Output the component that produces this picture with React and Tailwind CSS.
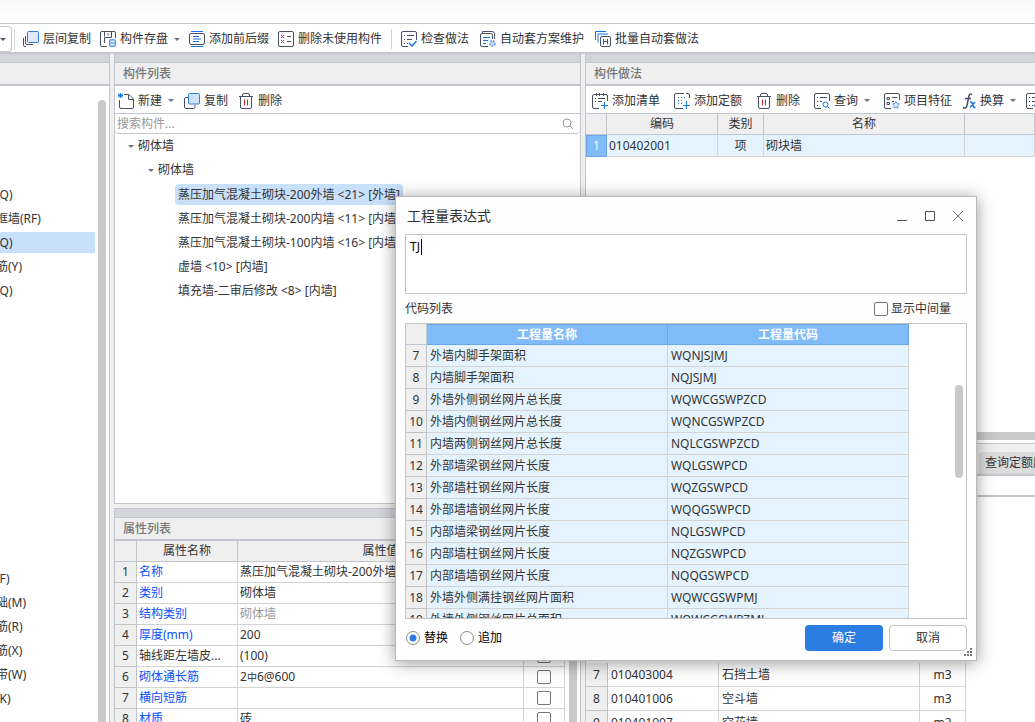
import { useState } from 'react';

const navItems = [
  '', '', '', '', '(Q)', '框墙(RF)', '(Q)', '筋(Y)', '(Q)', '', '', ')', '', '', '',
  '', '', '', '', '', '(F)', '础(M)', '筋(R)', '筋(X)', '带(W)', '(K)',
];

const components = [
  '蒸压加气混凝土砌块-200外墙 <21> [外墙]',
  '蒸压加气混凝土砌块-200内墙 <11> [内墙]',
  '蒸压加气混凝土砌块-100内墙 <16> [内墙]',
  '虚墙 <10> [内墙]',
  '填充墙-二审后修改 <8> [内墙]',
];

const properties = [
  { name: '名称', value: '蒸压加气混凝土砌块-200外墙', link: true },
  { name: '类别', value: '砌体墙', link: true },
  { name: '结构类别', value: '砌体墙', link: true, muted: true },
  { name: '厚度(mm)', value: '200', link: true },
  { name: '轴线距左墙皮...', value: '(100)' },
  { name: '砌体通长筋', value: <>2<span className="text-[10px]">中</span>6@600</>, link: true },
  { name: '横向短筋', value: '', link: true },
  { name: '材质', value: '砖', link: true },
];

// first visible quota is no. 7
const quotas = [
  ['010403004', '石挡土墙'],
  ['010401006', '空斗墙'],
  ['010401007', '空花墙'],
];

const codes = [
  ['外墙内脚手架面积', 'WQNJSJMJ'],
  ['内墙脚手架面积', 'NQJSJMJ'],
  ['外墙外侧钢丝网片总长度', 'WQWCGSWPZCD'],
  ['外墙内侧钢丝网片总长度', 'WQNCGSWPZCD'],
  ['内墙两侧钢丝网片总长度', 'NQLCGSWPZCD'],
  ['外部墙梁钢丝网片长度', 'WQLGSWPCD'],
  ['外部墙柱钢丝网片长度', 'WQZGSWPCD'],
  ['外部墙墙钢丝网片长度', 'WQQGSWPCD'],
  ['内部墙梁钢丝网片长度', 'NQLGSWPCD'],
  ['内部墙柱钢丝网片长度', 'NQZGSWPCD'],
  ['内部墙墙钢丝网片长度', 'NQQGSWPCD'],
  ['外墙外侧满挂钢丝网片面积', 'WQWCGSWPMJ'],
  ['外墙外侧钢丝网片总面积', 'WQWCGSWPZMJ'],
];

const Icon = ({ children }) => (
  <svg width="16" height="16" viewBox="0 0 16 16" fill="none" stroke="#4a5064" className="shrink-0">
    {children}
  </svg>
);

const icons = {
  layerCopy: (
    <Icon>
      <path d="M2.500 5v7q0 1.500 1.500 1.500h6M.5 7v7q0 1.500 1.500 1.500h1" />
      <rect x="4.500" y=".5" width="11" height="11" rx="1" fill="#dfeafb" stroke="#2f7de1" />
    </Icon>
  ),
  save: (
    <Icon>
      <path d="M15.500 7V2q0-1.500-1.500-1.500H2Q.5.5.5 2v12q0 1.500 1.500 1.500h5M4.500.5v5M4.500 12V6.500h7v-6M8 2.500v2" />
      <rect x="9.500" y="8.500" width="6" height="7" rx="1" fill="#8fbcf6" stroke="#5b9bf0" />
      <path d="M11 13.500h3M11 10.500h3" stroke="#fff" />
    </Icon>
  ),
  affix: (
    <Icon>
      <rect x=".5" y="2.500" width="15" height="11" rx="1.500" />
      <path d="M2 .5h12M2 15.500h12M4 5.500h6M4 8h8M4 10.500h6" stroke="#1677e8" />
    </Icon>
  ),
  unused: (
    <Icon>
      <rect x=".5" y=".5" width="15" height="15" rx="1.500" />
      <path d="M9 5.500h4M9 10.500h4" />
      <path d="m3 4 3 3m0-3L3 7m0 2 3 3m0-3-3 3" stroke="#d8232f" />
    </Icon>
  ),
  check: (
    <Icon>
      <path d="M15.500 9V2q0-1.500-1.500-1.500H2Q.5.5.5 2v12q0 1.500 1.500 1.500h5M3 4.500h1m2 0h7M3 8.500h1m2 0h5M3 12.500h1m2 0h1" />
      <path d="m8 12 3 3 4.500-5" stroke="#1677e8" strokeWidth="1.500" />
    </Icon>
  ),
  scheme: (
    <Icon>
      <path d="M2.500 2V.5H12q2.500 0 2.500 2.500v5M12.500 8V4q0-1.500-1.500-1.500H2Q.5 2.500.5 4v10q0 1.500 1.500 1.500h6" />
      <path d="M3 6.500h7M3 9.500h5M3 12.500h3" stroke="#1677e8" />
      <circle cx="12.500" cy="12.500" r="2.500" fill="#c6dcfa" stroke="#78aaf0" strokeWidth="2" strokeDasharray="2 1" />
    </Icon>
  ),
  batch: (
    <Icon>
      <path d="M.5 9V.5H11M3 11.500V3h10" stroke="#1677e8" />
      <rect x="5.500" y="5.500" width="10" height="10" rx="1.500" />
      <path d="M8.500 8v5.500m4-5.500v5.500m-4-3h4" />
    </Icon>
  ),
  create: (
    <Icon>
      <path d="M6 1.500h5l4.500 4.500v8q0 1.500-1.500 1.500H3q-1.500 0-1.500-1.500V7M10.500 2v4.500H15" />
      <path d="m0 .5 5 4m0-4-5 4M2.500 0v5M0 2.500h5" stroke="#1677e8" />
    </Icon>
  ),
  copy: (
    <Icon>
      <path d="M4 4.500H2Q.5 4.500.5 6v8q0 1.500 1.500 1.500h7.500q1.500 0 1.500-1.500v-2" />
      <rect x="4.500" y=".5" width="11" height="10.500" rx="1" fill="#cfe2fb" stroke="#2f7de1" />
    </Icon>
  ),
  trash: (
    <Icon>
      <path d="M1 3.500h14M4.500 3.500V2q0-1.500 1.500-1.500h4q1.500 0 1.500 1.500v1.500M2.500 3.500V14q0 1.500 1.500 1.500h8q1.500 0 1.500-1.500V3.500" />
      <path d="M6.500 6.500v6m3-6v6" stroke="#d8232f" />
    </Icon>
  ),
  addList: (
    <Icon>
      <path d="M15.500 8V3q0-1.500-1.500-1.500H2Q.5 1.500.5 3v11q0 1.500 1.500 1.500h5M4.500 0v3m3-3v3m4-3v3M3 5.500h1m2 0h7M3 8.500h1m2 0h4" />
      <path d="M12.500 9v7M9 12.500h7" stroke="#1677e8" />
    </Icon>
  ),
  addQuota: (
    <Icon>
      <path d="M15.500 5V2q0-1.500-1.500-1.500h-2M10 .5H2Q.5.5.5 2v12q0 1.500 1.500 1.500h7" />
      <path d="M4 4.500h1m2 0h1m2 0h1M4 7.500h1m2 0h1M4 10.500h1m2 0h1M12.500 8v8M9 12.500h7" stroke="#1677e8" />
    </Icon>
  ),
  query: (
    <Icon>
      <path d="M15.500 8V2q0-1.500-1.500-1.500H2Q.5.5.5 2v12q0 1.500 1.500 1.500h5M3 4.500h1m2 0h7M3 8.500h1m2 0h2M3 12.500h1" />
      <circle cx="11.500" cy="11.500" r="2.500" stroke="#1677e8" />
      <path d="m13.500 13.500 2 2" stroke="#1677e8" />
    </Icon>
  ),
  feature: (
    <Icon>
      <path d="M15.500 7V2q0-1.500-1.500-1.500H2Q.5.5.5 2v12q0 1.500 1.500 1.500h5M3 4.500h2.500v2H3zM3 9.500h2.500v2H3zM8 4.500h5M8 8.500h2" />
      <path d="m12 8.500 1.100 2.200 2.400.3-1.800 1.700.5 2.500-2.200-1.200-2.200 1.200.5-2.500L8.500 11l2.400-.3z" fill="#e4effd" stroke="#5b9bf0" />
    </Icon>
  ),
  fx: (
    <svg width="14" height="16" viewBox="0 0 14 16" fill="none" stroke="#4a5064" className="shrink-0">
      <path d="M10 1.500C8 0 7 2 6.500 5L5 12.500c-.5 2.500-2 3-4 2M3 5.500h6" strokeWidth="1.500" />
      <path d="M8 9h1.500l2.500 5.500h1.500M13 9l-5 5.500" stroke="#1677e8" strokeWidth="1.500" />
    </svg>
  ),
};

const Arrow = () => <span className="ml-0.5 border-x-[3px] border-t-[3px] border-x-transparent border-t-gray-500" />;

const ToolButton = ({ icon, label, menu }) => (
  <button className="flex shrink-0 items-center gap-1 whitespace-nowrap">
    {icons[icon]}
    {label}
    {menu && <Arrow />}
  </button>
);

const PanelHeader = ({ title }) => (
  <div className="shrink-0">
    <div className="h-[9px] border-b border-[#c3c6cc] bg-[#d3d5da]" />
    <h2 className="h-[23px] border-b-2 border-[#c3c6cc] bg-[#efefef] pl-2 leading-[21px] font-medium text-[#777]">{title}</h2>
  </div>
);

const th = 'border-r border-b border-[#c3c6cc] bg-[#efefef] p-0 font-normal';
const td = 'truncate border-r border-b border-[#d3d3d3] px-0.5 py-0';
const rowNo = 'border-r border-b border-[#c3c3c3] bg-[#efefef] p-0 text-center';

const MainToolbar = () => (
  <div className="flex h-[31px] shrink-0 items-center border-t border-b-2 border-t-[#c9c9c9] border-b-[#c3c6cc] bg-white pt-0.5">
    <button aria-label="楼层" className="flex h-[26px] w-3 items-center rounded-r border border-l-0 border-[#c9c9c9]">
      <span className="border-x-[3px] border-t-[3px] border-x-transparent border-t-gray-600" />
    </button>
    <div className="mr-2 ml-0.5 h-5 w-px bg-gray-300" />
    <div className="flex gap-[9px]">
      <ToolButton icon="layerCopy" label="层间复制" />
      <ToolButton icon="save" label="构件存盘" menu />
      <ToolButton icon="affix" label="添加前后缀" />
      <ToolButton icon="unused" label="删除未使用构件" />
    </div>
    <div className="mx-[9px] h-5 w-px bg-gray-300" />
    <div className="flex gap-[11px]">
      <ToolButton icon="check" label="检查做法" />
      <ToolButton icon="scheme" label="自动套方案维护" />
      <ToolButton icon="batch" label="批量自动套做法" />
    </div>
  </div>
);

const Sidebar = () => (
  <aside className="flex w-[110px] shrink-0 flex-col border-r border-[#c3c6cc] bg-white">
    <PanelHeader title="" />
    <div className="flex min-h-0 flex-1">
      <ul className="w-[95px] overflow-hidden">
        {navItems.map((item, i) => (
          <li key={i} className="h-6 pt-0.5">
            <div className={`h-[21px] leading-[21px] ${i === 6 ? 'bg-[#c9e0fb]' : ''}`}>
              <span className="-ml-1">{item}</span>
            </div>
          </li>
        ))}
      </ul>
      <div className="mt-3.5 ml-[3px] w-2 rounded-t bg-[#c9c9c9]" />
    </div>
  </aside>
);

const ComponentList = () => (
  <section className="flex min-h-0 flex-1 flex-col border-x border-b border-[#c3c6cc] bg-white">
    <PanelHeader title="构件列表" />
    <div className="flex h-7 shrink-0 items-center gap-2.5 border-b border-[#c3c6cc] pt-0.5 pl-[3px]">
      <ToolButton icon="create" label="新建" menu />
      <ToolButton icon="copy" label="复制" />
      <ToolButton icon="trash" label="删除" />
    </div>
    <label className="flex h-5 shrink-0 items-center rounded border-b border-[#c3c6cc] pr-1.5">
      <input aria-label="搜索构件" placeholder="搜索构件..." className="min-w-0 flex-1 pl-0.5 outline-none placeholder:text-[#999]" />
      <svg width="12" height="12" viewBox="0 0 12 12" fill="none" stroke="#999">
        <circle cx="5" cy="5" r="4" />
        <path d="m8 8 3 3" />
      </svg>
    </label>
    <ul className="overflow-hidden leading-6 whitespace-nowrap">
      <li>
        <div className="flex items-center gap-1 pl-[11px]"><Arrow />砌体墙</div>
        <ul>
          <li>
            <div className="flex items-center gap-1 pl-[31px]"><Arrow />砌体墙</div>
            <ul className="pl-[60px]">
              {components.map((c, i) => (
                <li key={c} className="flex h-6 items-center">
                  <span className={`h-[21px] rounded-sm px-[3px] leading-[21px] ${i === 0 ? 'bg-[#c9e0fb]' : ''}`}>{c}</span>
                </li>
              ))}
            </ul>
          </li>
        </ul>
      </li>
    </ul>
  </section>
);

const PropertyList = () => (
  <section className="h-[214px] shrink-0 overflow-hidden border-x border-t border-[#c3c6cc] bg-white">
    <PanelHeader title="属性列表" />
    <div className="flex">
      <table className="flex-1 table-fixed border-separate border-spacing-0">
        <colgroup>
          <col className="w-[22px]" />
          <col className="w-[101px]" />
          <col />
          <col className="w-[41px]" />
        </colgroup>
        <thead>
          <tr className="h-[21px]">
            <th className={th} />
            <th className={th}>属性名称</th>
            <th className={th}>属性值</th>
            <th className={th} />
          </tr>
        </thead>
        <tbody>
          {properties.map((p, i) => (
            <tr key={p.name} className="h-[21px]">
              <td className={rowNo}>{i + 1}</td>
              <td className={`${td} ${p.link ? 'text-[#0a50ff]' : ''}`}>{p.name}</td>
              <td className={`${td} ${p.muted ? 'text-[#999]' : ''}`}>{p.value}</td>
              <td className={td}>
                <input type="checkbox" aria-label={p.name} className="mx-auto block size-3.5 appearance-none rounded-xs border border-[#777] bg-white" />
              </td>
            </tr>
          ))}
        </tbody>
      </table>
      <div className="mr-[3px] ml-1 w-2 bg-[#c9c9c9]" />
    </div>
  </section>
);

const MethodPanel = () => (
  <section className="flex min-h-0 flex-1 flex-col overflow-hidden border-b border-l border-[#c3c6cc] bg-white">
    <PanelHeader title="构件做法" />
    <div className="flex h-7 shrink-0 items-center gap-3.5 border-b border-[#c3c6cc] pt-0.5 pl-1.5">
      <ToolButton icon="addList" label="添加清单" />
      <ToolButton icon="addQuota" label="添加定额" />
      <ToolButton icon="trash" label="删除" />
      <ToolButton icon="query" label="查询" menu />
      <ToolButton icon="feature" label="项目特征" />
      <div className="-ml-1 flex gap-2.5">
        <ToolButton icon="fx" label="换算" menu />
        <ToolButton icon="check" label="" />
      </div>
    </div>
    <table className="w-full table-fixed border-separate border-spacing-0">
      <colgroup>
        <col className="w-[21px]" />
        <col className="w-[111px]" />
        <col className="w-[46px]" />
        <col className="w-[201px]" />
        <col />
      </colgroup>
      <thead>
        <tr className="h-[21px]">
          <th className={th} />
          <th className={th}>编码</th>
          <th className={th}>类别</th>
          <th className={th}>名称</th>
          <th className={th} />
        </tr>
      </thead>
      <tbody>
        <tr className="h-[22px] bg-[#e5f3fe]">
          <td className="border border-[#6ba6ec] bg-[#80bbfa] p-0 text-center text-white">1</td>
          <td className={td}>010402001</td>
          <td className={`${td} text-center`}>项</td>
          <td className={td}>砌块墙</td>
          <td className={td} />
        </tr>
      </tbody>
    </table>
    <div className="mt-auto mb-[3px] h-2 shrink-0 bg-[#c9c9c9]" />
  </section>
);

const QuotaPanel = () => (
  <section className="flex h-[274px] shrink-0 flex-col overflow-hidden border-l border-[#c3c6cc] bg-white">
    <div className="flex h-7 shrink-0 items-end justify-end border-b-2 border-[#c3c6cc] bg-[#efefef]">
      <button className="h-[22px] w-[56px] overflow-hidden rounded-tl bg-[#dcdcdc] pl-1.5 text-left whitespace-nowrap">查询定额库</button>
    </div>
    <div className="h-[21px] shrink-0 border-b-2 border-[#c3c6cc]" />
    {/* list is scrolled to its last rows */}
    <div className="flex min-h-0 flex-1 items-start pt-[166px]">
      <table className="w-[380px] table-fixed border-separate border-spacing-0">
        <colgroup>
          <col className="w-[22px]" />
          <col className="w-[111px]" />
          <col />
          <col className="w-[46px]" />
        </colgroup>
        <tbody>
          {quotas.map(([code, name], i) => (
            <tr key={code} className="h-6">
              <td className={rowNo}>{i + 7}</td>
              <td className={`${td} pl-[3px]`}>{code}</td>
              <td className={`${td} pl-[3px]`}>{name}</td>
              <td className={`${td} text-center`}>m3</td>
            </tr>
          ))}
        </tbody>
      </table>
    </div>
  </section>
);

const ExpressionDialog = () => {
  const [expression, setExpression] = useState('TJ');
  const [mode, setMode] = useState('replace');
  const [showMiddle, setShowMiddle] = useState(false);

  const blueHead = 'border-r border-b border-t border-[#6ba6ec] bg-[#80bbfa] p-0 font-bold text-white';
  const radio = 'size-3.5 appearance-none rounded-full border border-[#888] bg-white checked:bg-[radial-gradient(circle,#2b7de1_3px,white_4px)]';

  return (
    <div
      role="dialog"
      aria-label="工程量表达式"
      className="absolute top-[196px] left-[395px] w-[582px] border border-[#b9b9b9] bg-[#fefefe] px-[9px] pb-[9px] shadow-[0_2px_16px_rgba(0,0,0,0.4)]"
    >
      <div className="flex h-[37px] items-center justify-between pr-[3px] pl-0.5">
        <h1 className="text-sm">工程量表达式</h1>
        <div className="flex gap-4">
          <button aria-label="最小化">
            <svg width="12" height="12" fill="none" stroke="#555"><path d="M1 10.500h10" /></svg>
          </button>
          <button aria-label="最大化">
            <svg width="12" height="12" fill="none" stroke="#555"><path d="M1.500 1.500h9v9h-9z" /></svg>
          </button>
          <button aria-label="关闭">
            <svg width="12" height="12" fill="none" stroke="#777"><path d="m1 1 10 10M11 1 1 11" /></svg>
          </button>
        </div>
      </div>
      <div className="relative">
        <textarea
          aria-label="表达式"
          value={expression}
          onChange={e => setExpression(e.target.value)}
          className="block h-[60px] w-full resize-none border border-[#c3c3c3] bg-white px-1 py-1 leading-4 text-black outline-none"
        />
        {/* caret */}
        <span className="absolute top-[5px] left-4 h-4 w-px bg-black" />
      </div>
      <div className="flex h-[29px] items-center justify-between pr-4">
        <span>代码列表</span>
        <label className="flex items-center gap-[3px]">
          <input
            type="checkbox"
            checked={showMiddle}
            onChange={e => setShowMiddle(e.target.checked)}
            className="size-3.5 appearance-none rounded-xs border border-[#777] bg-white checked:bg-[#2b7de1]"
          />
          显示中间量
        </label>
      </div>
      <div className="flex h-[296px] justify-between overflow-hidden border border-[#c3c3c3] bg-white">
        <table className="h-fit w-[503px] table-fixed border-separate border-spacing-0">
          <colgroup>
            <col className="w-[21px]" />
            <col />
            <col />
          </colgroup>
          <thead>
            <tr className="h-[21px]">
              <th className={th} />
              <th className={blueHead}>工程量名称</th>
              <th className={blueHead}>工程量代码</th>
            </tr>
          </thead>
          <tbody>
            {codes.map(([name, code], i) => (
              <tr key={code} className="h-[22px] bg-[#e5f3fe]">
                <td className={rowNo}>{i + 7}</td>
                <td className={`${td} pl-[3px]`}>{name}</td>
                <td className={`${td} pl-[3px]`}>{code}</td>
              </tr>
            ))}
          </tbody>
        </table>
        <div className="mt-[61px] mr-[3px] h-[93px] w-2 rounded bg-[#c9c9c9]" />
      </div>
      <div className="mt-[6px] flex h-[26px] items-center gap-1.5">
        <label className="flex items-center gap-1 pl-px text-black">
          <input type="radio" name="mode" checked={mode === 'replace'} onChange={() => setMode('replace')} className={radio} />
          替换
        </label>
        <label className="ml-1.5 flex flex-1 items-center gap-1 text-black">
          <input type="radio" name="mode" checked={mode === 'append'} onChange={() => setMode('append')} className={radio} />
          追加
        </label>
        <button className="h-[26px] w-[78px] rounded bg-[#2b7de1] text-white">确定</button>
        <button className="h-[26px] w-[78px] rounded border border-[#c3c3c3] bg-white">取消</button>
      </div>
      <svg width="9" height="9" viewBox="0 0 9 9" fill="#777" className="absolute right-[3px] bottom-[3px]">
        <path d="M6 0h2v2H6zM3 3h2v2H3zM6 3h2v2H6zM0 6h2v2H0zM3 6h2v2H3zM6 6h2v2H6z" />
      </svg>
    </div>
  );
};

export default function App() {
  return (
    <div className="relative flex h-screen flex-col overflow-hidden bg-[#efefef] font-['Noto_Sans','Noto_Sans_CJK_SC',sans-serif] text-[12px] leading-4 text-[#333]">
      <div className="h-[23px] shrink-0 bg-linear-to-b from-[#f8f8f8] to-white" />
      <MainToolbar />
      <main className="flex min-h-0 flex-1">
        <Sidebar />
        <div className="ml-1 flex w-[467px] shrink-0 flex-col gap-1">
          <ComponentList />
          <PropertyList />
        </div>
        <div className="ml-1 flex min-w-0 flex-1 flex-col gap-1">
          <MethodPanel />
          <QuotaPanel />
        </div>
      </main>
      <ExpressionDialog />
    </div>
  );
}
